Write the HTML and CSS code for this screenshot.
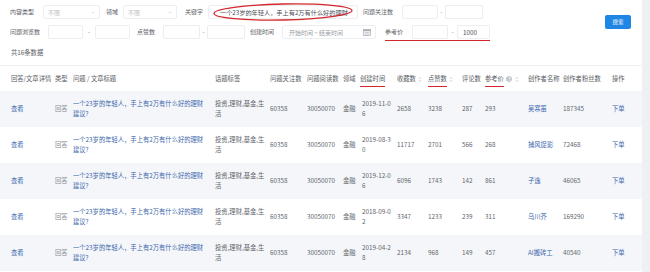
FILE: index.html
```html
<!DOCTYPE html>
<html lang="zh">
<head>
<meta charset="utf-8">
<title>问答数据</title>
<link rel="stylesheet" href="styles.css">
</head>
<body>
<div class="page">
  <div class="filters">
    <div class="fgrid">
      <div class="frow">
        <span class="lbl w33">内容类型</span>
        <div class="box sel w57"><span class="ph">不限</span><svg class="chev" viewBox="0 0 6 4" width="4" height="3"><path d="M1 1 L3 3 L5 1" fill="none" stroke="#c0c4cc" stroke-width="0.8"/></svg></div>
        <span class="lbl ml6 w17">领域</span>
        <div class="box sel w54"><span class="ph">不限</span><svg class="chev" viewBox="0 0 6 4" width="4" height="3"><path d="M1 1 L3 3 L5 1" fill="none" stroke="#c0c4cc" stroke-width="0.8"/></svg></div>
        <span class="lbl ml8 w23">关键字</span>
        <div class="box kw w150">
          <span class="kwtext">一个23岁的年轻人，手上有2万有什么好的理财</span>
          <svg class="ring" viewBox="0 0 144 20" width="144" height="20"><ellipse cx="71" cy="10" rx="69" ry="8" fill="none" stroke="#d3262b" stroke-width="1.3" transform="rotate(-1.2 71 10)"/></svg>
        </div>
        <span class="lbl ml5 w39">问题关注数</span>
        <div class="box w36"></div>
        <span class="dash w7">-</span>
        <div class="box w38"></div>
      </div>
      <div class="frow">
        <span class="lbl w38">问题浏览数</span>
        <div class="box w35"></div>
        <span class="dash w12">-</span>
        <div class="box w35"></div>
        <span class="lbl ml7 w26">点赞数</span>
        <div class="box w37"></div>
        <span class="dash w7">-</span>
        <div class="box w38"></div>
        <span class="lbl ml5 w32">创建时间</span>
        <div class="box date w94"><span class="ph dk">开始时间 ~ 结束时间</span><svg class="cal" viewBox="0 0 8 7" width="8" height="7"><rect x="0.5" y="0.5" width="7" height="6" fill="#eef0f4" stroke="#a9adb5" stroke-width="0.7"/><rect x="0.5" y="0.5" width="7" height="1.6" fill="#a9adb5"/><path d="M2 3.5 H6 M2 5 H6" stroke="#a9adb5" stroke-width="0.5"/></svg></div>
        <span class="refgroup ml9">
          <span class="lbl w27">参考价</span>
          <span class="box w36"></span>
          <span class="dash w9">-</span>
          <span class="box w33"><span class="val">1000</span></span>
        </span>
      </div>
    </div>
    <button class="search">搜索</button>
  </div>
  <div class="count">共16条数据</div>
  <table class="grid">
    <colgroup>
      <col class="c1"><col class="c2"><col class="c3"><col class="c4"><col class="c5"><col class="c6"><col class="c7"><col class="c8"><col class="c9"><col class="c10"><col class="c11"><col class="c12"><col class="c13"><col class="c14"><col class="c15">
    </colgroup>
    <thead>
      <tr>
        <th class="first">回答/文章详情</th>
        <th>类型</th>
        <th>问题 / 文章标题</th>
        <th>话题标签</th>
        <th>问题关注数</th>
        <th>问题阅读数</th>
        <th>领域</th>
        <th><span class="mark">创建时间</span></th>
        <th>收藏数 <svg class="sort" viewBox="0 0 6 10" width="4" height="7"><path d="M1 4 L3 2 L5 4 M1 6 L3 8 L5 6" fill="none" stroke="#aeb2b9" stroke-width="0.9"/></svg></th>
        <th><span class="mark">点赞数</span> <svg class="sort" viewBox="0 0 6 10" width="4" height="7"><path d="M1 4 L3 2 L5 4 M1 6 L3 8 L5 6" fill="none" stroke="#aeb2b9" stroke-width="0.9"/></svg></th>
        <th>评论数</th>
        <th><span class="mark">参考价</span> <span class="q">?</span> <svg class="sort" viewBox="0 0 6 10" width="4" height="7"><path d="M1 4 L3 2 L5 4 M1 6 L3 8 L5 6" fill="none" stroke="#aeb2b9" stroke-width="0.9"/></svg></th>
        <th>创作者名称</th>
        <th>创作者粉丝数</th>
        <th>操作</th>
      </tr>
    </thead>
    <tbody>
      <tr class="odd">
        <td class="first link">查看</td><td class="type">回答</td><td class="title link">一个23岁的年轻人，手上有2万有什么好的理财建议?</td><td class="tags">投资,理财,基金,生活</td><td>60358</td><td>30050070</td><td>金融</td><td class="date">2019-11-06</td><td>2658</td><td>3238</td><td>287</td><td>293</td><td class="link">吴寒笛</td><td>187345</td><td class="link">下单</td>
      </tr>
      <tr>
        <td class="first link">查看</td><td class="type">回答</td><td class="title link">一个23岁的年轻人，手上有2万有什么好的理财建议?</td><td class="tags">投资,理财,基金,生活</td><td>60358</td><td>30050070</td><td>金融</td><td class="date">2019-08-30</td><td>11717</td><td>2701</td><td>566</td><td>268</td><td class="link">捕风捉影</td><td>72468</td><td class="link">下单</td>
      </tr>
      <tr class="odd">
        <td class="first link">查看</td><td class="type">回答</td><td class="title link">一个23岁的年轻人，手上有2万有什么好的理财建议?</td><td class="tags">投资,理财,基金,生活</td><td>60358</td><td>30050070</td><td>金融</td><td class="date">2019-12-06</td><td>6096</td><td>1743</td><td>142</td><td>861</td><td class="link">子逸</td><td>46065</td><td class="link">下单</td>
      </tr>
      <tr>
        <td class="first link">查看</td><td class="type">回答</td><td class="title link">一个23岁的年轻人，手上有2万有什么好的理财建议?</td><td class="tags">投资,理财,基金,生活</td><td>60358</td><td>30050070</td><td>金融</td><td class="date">2018-09-02</td><td>3347</td><td>1233</td><td>239</td><td>311</td><td class="link">乌川芥</td><td>169290</td><td class="link">下单</td>
      </tr>
      <tr class="odd">
        <td class="first link">查看</td><td class="type">回答</td><td class="title link">一个23岁的年轻人，手上有2万有什么好的理财建议?</td><td class="tags">投资,理财,基金,生活</td><td>60358</td><td>30050070</td><td>金融</td><td class="date">2019-04-28</td><td>2134</td><td>968</td><td>149</td><td>457</td><td class="link">AI搬砖工</td><td>40540</td><td class="link">下单</td>
      </tr>
    </tbody>
  </table>
</div>
</body>
</html>
```

FILE: styles.css
```css
html, body {
  margin: 0;
  padding: 0;
}
body {
  background: #eef0f3;
  font-family: "Noto Sans CJK SC", "Noto Sans", sans-serif;
  color: #606266;
}
.page {
  width: 642px;
  height: 272px;
  background: #fff;
  overflow: hidden;
}

/* filters */
.filters {
  display: flex;
  align-items: center;
  padding: 5px 11px 0 10px;
}
.fgrid {
  display: flex;
  flex-direction: column;
  gap: 6px;
}
.frow {
  display: flex;
  align-items: center;
  height: 14px;
  font-size: 6px;
}
.lbl {
  display: block;
  white-space: nowrap;
  line-height: 14px;
  color: #5c6067;
  flex: none;
}
.box {
  display: flex;
  align-items: center;
  flex: none;
  height: 14px;
  box-sizing: border-box;
  border: 1px solid #eceef1;
  border-radius: 2px;
  background: #fff;
  font-size: 6px;
  padding: 0 4px;
}
.sel {
  justify-content: space-between;
}
.ph {
  color: #b9bdc4;
  white-space: nowrap;
}
.ph.dk {
  color: #9a9ea6;
  padding-left: 2px;
}
.date {
  justify-content: space-between;
}
.cal {
  display: block;
}
.chev {
  display: block;
}
.kw {
  position: relative;
  padding-left: 11px;
}
.kwtext {
  display: block;
  white-space: nowrap;
  font-size: 6.2px;
  color: #4a4e55;
}
.ring {
  position: absolute;
  left: 3px;
  top: -4px;
}
.dash {
  display: block;
  flex: none;
  text-align: center;
  color: #7a7e85;
  line-height: 14px;
}
.val {
  font-size: 6.3px;
  color: #4a4e55;
  padding-left: 1px;
}
.refgroup {
  display: flex;
  align-items: center;
  flex: none;
  padding-bottom: 1px;
  margin-bottom: -2px;
  border-bottom: 1.4px solid #d3262b;
}
.search {
  margin-left: auto;
  width: 26px;
  height: 14px;
  padding: 0;
  border: none;
  border-radius: 2px;
  background: #1f86e6;
  color: #fff;
  font-family: inherit;
  font-size: 5.5px;
  line-height: 14px;
  margin-top: -1px;
}

.w7 { width: 7px; }
.w9 { width: 9px; }
.w12 { width: 12px; }
.w17 { width: 17px; }
.w23 { width: 23px; }
.w26 { width: 26px; }
.w27 { width: 27px; }
.w32 { width: 32px; }
.w33 { width: 33px; }
.w35 { width: 35px; }
.w36 { width: 36px; }
.w37 { width: 37px; }
.w38 { width: 38px; }
.w39 { width: 39px; }
.w54 { width: 54px; }
.w57 { width: 57px; }
.w94 { width: 94px; }
.w150 { width: 150px; }
.ml5 { margin-left: 5px; }
.ml6 { margin-left: 6px; }
.ml7 { margin-left: 7px; }
.ml8 { margin-left: 8px; }
.ml9 { margin-left: 9px; }

.count {
  margin-top: 10px;
  padding-left: 11px;
  font-size: 6.3px;
  line-height: 8px;
  color: #5c6067;
}

/* table */
.grid {
  margin-top: 8px;
  width: 642px;
  table-layout: fixed;
  border-collapse: collapse;
  border-top: 1px solid #eef0f3;
  font-size: 6.3px;
}
.c1 { width: 55px; }
.c2 { width: 18px; }
.c3 { width: 142px; }
.c4 { width: 55px; }
.c5 { width: 37px; }
.c6 { width: 36px; }
.c7 { width: 17px; }
.c8 { width: 37px; }
.c9 { width: 31px; }
.c10 { width: 34px; }
.c11 { width: 23px; }
.c12 { width: 43px; }
.c13 { width: 35px; }
.c14 { width: 49px; }
.c15 { width: 30px; }

.grid th,
.grid td {
  padding: 0;
  text-align: left;
  vertical-align: middle;
  font-weight: normal;
  line-height: 9.6px;
  white-space: nowrap;
}
.grid th {
  height: 25px;
  color: #585c63;
}
.grid td {
  height: 36px;
  color: #62666d;
}
.grid .first {
  padding-left: 11px;
}
.grid tr.odd td {
  background: #f4f6f9;
}
.grid .type {
  color: #8a8e95;
}
.grid td.title {
  white-space: normal;
  padding-right: 9px;
}
.grid td.tags {
  white-space: normal;
  padding-right: 3px;
}
.grid td.date {
  white-space: normal;
  word-break: break-all;
  padding-left: 2px;
  padding-right: 5px;
}
.grid .link {
  color: #3c68ad;
}
.mark {
  display: inline-block;
  padding-bottom: 3px;
  margin-bottom: -4px;
  border-bottom: 1.4px solid #d3262b;
}
.sort {
  display: inline-block;
  vertical-align: middle;
  margin-left: 1px;
}
.q {
  display: inline-block;
  width: 6px;
  height: 6px;
  border-radius: 50%;
  background: #c3c7cd;
  color: #fff;
  font-size: 5px;
  line-height: 6px;
  text-align: center;
  vertical-align: middle;
  margin-left: 1px;
}
```
